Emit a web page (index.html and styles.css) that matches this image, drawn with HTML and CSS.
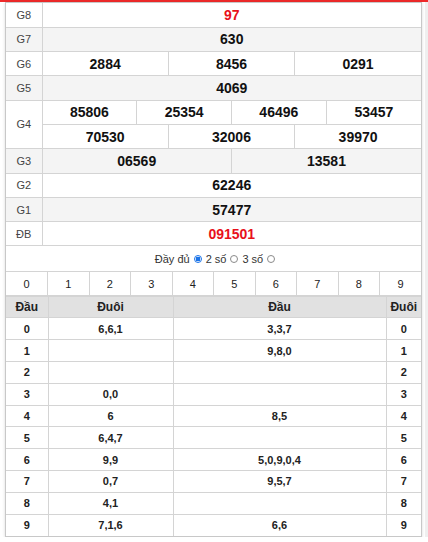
FILE: index.html
```html
<!DOCTYPE html>
<html lang="vi">
<head>
<meta charset="utf-8">
<link rel="stylesheet" href="styles.css">
</head>
<body>
<div class="topbar"></div>
<div class="page">
  <div class="box">
    <table class="kq">
      <colgroup><col class="c-lbl"><col span="12"></colgroup>
      <tr class="w"><td class="lbl">G8</td><td colspan="12" class="num red">97</td></tr>
      <tr class="g"><td class="lbl">G7</td><td colspan="12" class="num">630</td></tr>
      <tr class="w"><td class="lbl">G6</td><td colspan="4" class="num">2884</td><td colspan="4" class="num">8456</td><td colspan="4" class="num">0291</td></tr>
      <tr class="g"><td class="lbl">G5</td><td colspan="12" class="num">4069</td></tr>
      <tr class="w"><td class="lbl" rowspan="2">G4</td><td colspan="3" class="num">85806</td><td colspan="3" class="num">25354</td><td colspan="3" class="num">46496</td><td colspan="3" class="num">53457</td></tr>
      <tr class="w"><td colspan="4" class="num">70530</td><td colspan="4" class="num">32006</td><td colspan="4" class="num">39970</td></tr>
      <tr class="g"><td class="lbl">G3</td><td colspan="6" class="num">06569</td><td colspan="6" class="num">13581</td></tr>
      <tr class="w"><td class="lbl">G2</td><td colspan="12" class="num">62246</td></tr>
      <tr class="g"><td class="lbl">G1</td><td colspan="12" class="num">57477</td></tr>
      <tr class="w"><td class="lbl">ĐB</td><td colspan="12" class="num red">091501</td></tr>
    </table>
    <div class="opts">
      <span>Đầy đủ</span><span class="radio on"></span><span>2 số</span><span class="radio"></span><span>3 số</span><span class="radio"></span>
    </div>
    <table class="digits">
      <tr><td>0</td><td>1</td><td>2</td><td>3</td><td>4</td><td>5</td><td>6</td><td>7</td><td>8</td><td>9</td></tr>
    </table>
    <table class="loto">
      <colgroup><col class="l1"><col class="l2"><col class="l3"><col class="l4"></colgroup>
      <tr class="head"><th>Đầu</th><th>Đuôi</th><th>Đầu</th><th>Đuôi</th></tr>
      <tr><td>0</td><td>6,6,1</td><td>3,3,7</td><td>0</td></tr>
      <tr><td>1</td><td></td><td>9,8,0</td><td>1</td></tr>
      <tr><td>2</td><td></td><td></td><td>2</td></tr>
      <tr><td>3</td><td>0,0</td><td></td><td>3</td></tr>
      <tr><td>4</td><td>6</td><td>8,5</td><td>4</td></tr>
      <tr><td>5</td><td>6,4,7</td><td></td><td>5</td></tr>
      <tr><td>6</td><td>9,9</td><td>5,0,9,0,4</td><td>6</td></tr>
      <tr><td>7</td><td>0,7</td><td>9,5,7</td><td>7</td></tr>
      <tr><td>8</td><td>4,1</td><td></td><td>8</td></tr>
      <tr><td>9</td><td>7,1,6</td><td>6,6</td><td>9</td></tr>
    </table>
  </div>
  <div class="strip"></div>
</div>
</body>
</html>
```

FILE: styles.css
```css
* { box-sizing: border-box; }
html, body { margin: 0; padding: 0; background: #fff; }
body {
  font-family: "Liberation Sans", Arial, sans-serif;
  color: #222;
}
.topbar {
  height: 2px;
  background: #ee2a2a;
}
.page {
  display: flex;
  align-items: stretch;
}
.box {
  margin-left: 5px;
  width: 417px;
  border: 1px solid #c8c8c8;
  box-shadow: 0 1px 3px rgba(0,0,0,0.15);
}
.strip {
  margin-left: auto;
  width: 3px;
  background: #efefef;
}
table {
  width: 100%;
  border-collapse: collapse;
  table-layout: fixed;
}
td, th {
  border: 1px solid #d4d4d4;
  padding: 0;
  text-align: center;
  vertical-align: middle;
}
.kq { border-top: hidden; border-left: hidden; border-right: hidden; }
.kq .c-lbl { width: 36px; }
.kq tr { height: 24.3px; }
.kq tr.g td { background: #f4f4f4; }
.kq .lbl {
  font-size: 11px;
  color: #444;
}
.kq .num {
  font-size: 14px;
  font-weight: bold;
  color: #111;
}
.kq .num.red { color: #e8101a; }

.opts {
  height: 25px;
  display: flex;
  align-items: center;
  justify-content: center;
  gap: 3px;
  font-size: 11px;
  color: #333;
  padding-left: 4px;
}
.radio {
  width: 8px;
  height: 8px;
  border-radius: 50%;
  border: 1px solid #8a8a8a;
  background: #fff;
  display: inline-block;
  margin: 0 1px;
}
.radio.on {
  border: 1px solid #1a73e8;
  background: radial-gradient(circle, #1a73e8 0 2.2px, #fff 2.6px);
}

.digits { border-left: hidden; border-right: hidden; }
.digits td {
  height: 24px;
  font-size: 11px;
  color: #222;
}

.loto { border-left: hidden; border-right: hidden; border-bottom: hidden; }
.loto .l1 { width: 42px; }
.loto .l2 { width: 125px; }
.loto .l3 { width: 213px; }
.loto .l4 { width: 35px; }
.loto th {
  height: 21px;
  background: #e1e1e1;
  font-size: 12px;
  font-weight: bold;
  color: #222;
}
.loto td {
  height: 21.8px;
  font-size: 11px;
  font-weight: bold;
  color: #222;
}
```
